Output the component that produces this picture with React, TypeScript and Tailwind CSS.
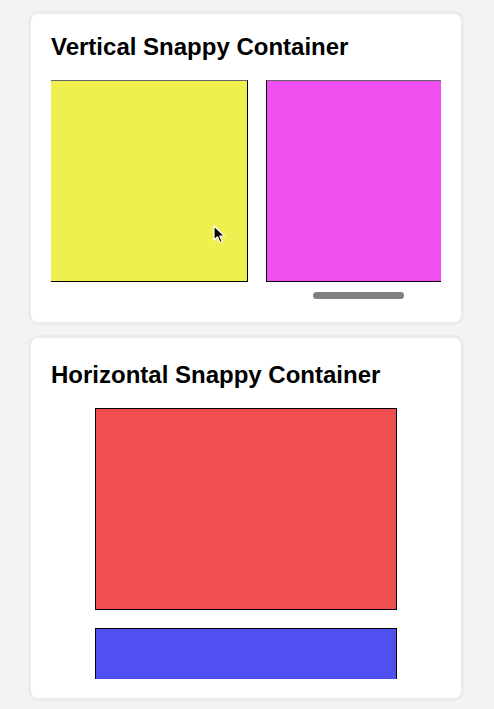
export default function App() {
  return (
    <div className="min-h-screen bg-[#f3f3f3] pt-[11px] pb-[8px] font-['Liberation_Sans',Arial,sans-serif] text-black">
      <div className="ml-[28px] w-[436px] flex flex-col gap-[10px]">
        <div className="rounded-[10px] border-[3px] border-[#ebebeb] bg-white px-[20px] pt-[17px] pb-[23px]">
          <h2 className="text-2xl leading-8 font-bold">Vertical Snappy Container</h2>
          <div className="relative mt-[17px] w-[390px] h-[202px] overflow-hidden">
            <div className="flex gap-[18px] -ml-[5px]">
              <div className="w-[202px] h-[202px] shrink-0 border border-black border-t-[#666] bg-[#efef4f]" />
              <div className="w-[202px] h-[202px] shrink-0 border border-black border-t-[#666] bg-[#ef4fef]" />
            </div>
            <svg
              className="absolute left-[162px] top-[145px]"
              width="14"
              height="20"
              viewBox="0 0 14 20"
            >
              <path
                d="M1 1 L1 15 L4.5 11.8 L7 17.5 L9.2 16.5 L6.8 11 L11.5 11 Z"
                fill="#000"
                stroke="#fff"
                strokeWidth="1.2"
                strokeLinejoin="round"
              />
            </svg>
          </div>
          <div className="mt-[10px] ml-[262px] w-[91px] h-[7px] rounded-full bg-[#808080]" />
        </div>

        <div className="rounded-[10px] border-[3px] border-[#ebebeb] bg-white px-[20px] pt-[21px] pb-[19px]">
          <h2 className="text-2xl leading-8 font-bold">Horizontal Snappy Container</h2>
          <div className="mt-[17px] mx-auto w-[302px] h-[271px] overflow-hidden">
            <div className="flex flex-col gap-[18px]">
              <div className="w-[302px] h-[202px] shrink-0 border border-black bg-[#ef4f4f]" />
              <div className="w-[302px] h-[202px] shrink-0 border border-black bg-[#4f50ef]" />
            </div>
          </div>
        </div>
      </div>
    </div>
  )
}
